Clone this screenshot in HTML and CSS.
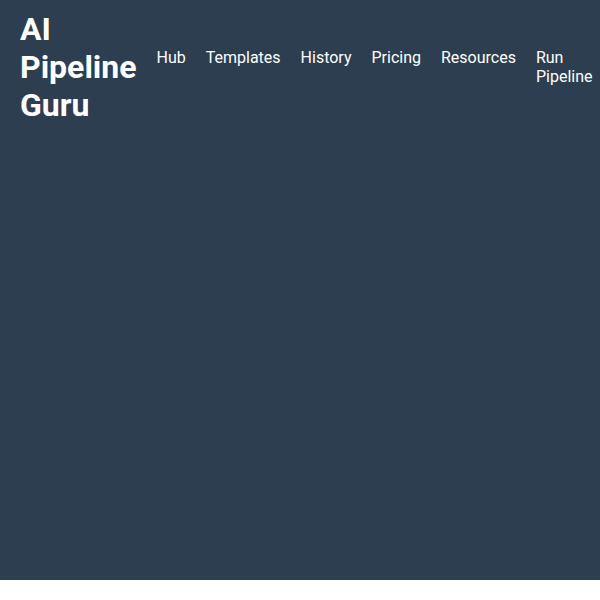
FILE: index.html
```html
<!DOCTYPE html>
<html lang="en">
<head>
<meta charset="utf-8">
<title>AI Pipeline Guru</title>
<link rel="stylesheet" href="styles.css">
</head>
<body>
<div class="page">
  <header class="header">
    <div class="logo">AI Pipeline Guru</div>
    <nav class="nav">
      <a href="#">Hub</a>
      <a href="#">Templates</a>
      <a href="#">History</a>
      <a href="#">Pricing</a>
      <a href="#">Resources</a>
      <a href="#">Run Pipeline</a>
    </nav>
  </header>
</div>
</body>
</html>
```
FILE: styles.css
```css
html, body {
  margin: 0;
  padding: 0;
  background: #ffffff;
}
body {
  font-family: Roboto, "Liberation Sans", sans-serif;
}
.page {
  height: 580px;
  background: #2c3e50;
  color: #ffffff;
}
.header {
  display: flex;
  align-items: center;
  gap: 20px;
  padding: 10px 20px;
}
.logo {
  font-size: 32px;
  font-weight: 700;
  line-height: normal;
}
.nav {
  display: flex;
  align-items: flex-start;
  gap: 20px;
}
.nav a {
  color: #ffffff;
  text-decoration: none;
  font-size: 16px;
  line-height: normal;
}
```
